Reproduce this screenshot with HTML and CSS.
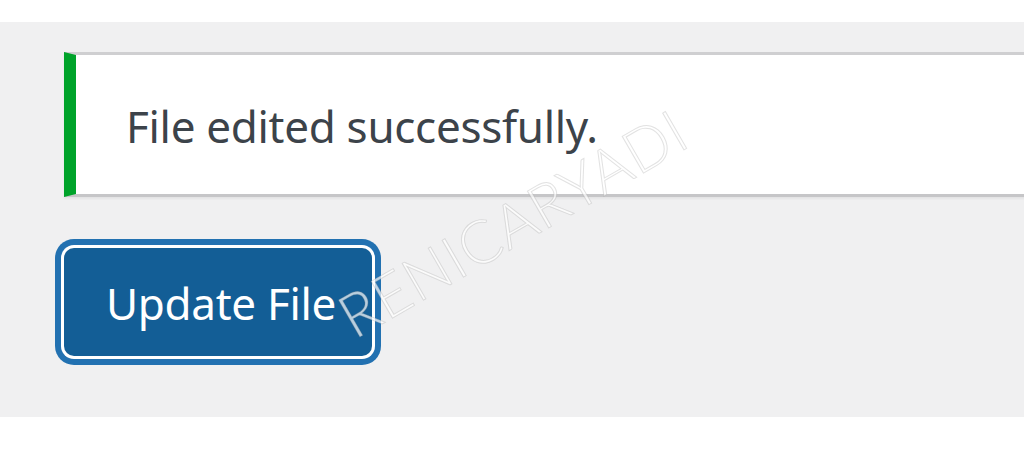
FILE: index.html
```html
<!DOCTYPE html>
<html lang="en">
<head>
<meta charset="utf-8">
<title>File edited</title>
<link rel="stylesheet" href="styles.css">
</head>
<body>
<div class="top-band"></div>
<main class="panel">
  <div class="notice notice-success">
    <p class="notice-text">File edited successfully.</p>
  </div>
  <div class="actions">
    <button class="button-primary" type="button">Update File</button>
  </div>
  <div class="watermark" aria-hidden="true">RENICARYADI</div>
</main>
<div class="bottom-band"></div>
</body>
</html>
```

FILE: styles.css
```css
html, body {
  margin: 0;
  padding: 0;
  background: #ffffff;
  overflow: hidden;
}

body {
  width: 1024px;
  height: 456px;
  font-family: "Noto Sans", "Open Sans", "Liberation Sans", sans-serif;
}

.top-band {
  height: 22px;
  background: #ffffff;
}

.panel {
  position: relative;
  height: 395px;
  background: #f0f0f1;
  padding-top: 30px;
  padding-left: 64px;
  box-sizing: border-box;
  overflow: hidden;
}

.notice {
  background: #ffffff;
  border-left: 12px solid #00a32a;
  border-top: 3px solid #cfcfd1;
  border-bottom: 3px solid #c6c6c8;
  box-shadow: 0 2px 2px rgba(0, 0, 0, 0.05);
  margin-right: -40px;
  display: flex;
  align-items: center;
  box-sizing: border-box;
  height: 145px;
}

.notice-text {
  margin: 0;
  padding-left: 50px;
  font-size: 44px;
  line-height: 1;
  color: #3c434a;
  letter-spacing: -0.3px;
  position: relative;
  top: 1px;
}

.actions {
  margin-top: 51px;
  display: flex;
}

.button-primary {
  width: 308px;
  height: 108px;
  background: #135e96;
  color: #ffffff;
  border: none;
  border-radius: 10px;
  box-shadow: 0 0 0 3px #ffffff, 0 0 0 9px #2271b1;
  font-family: "Noto Sans", "Open Sans", "Liberation Sans", sans-serif;
  font-size: 44px;
  letter-spacing: -0.3px;
  padding: 2px 0 0 6px;
  margin: 0;
  cursor: pointer;
}

.watermark {
  position: absolute;
  left: 358px;
  top: 264px;
  font-family: "Lato", "Noto Sans", sans-serif;
  font-weight: 300;
  font-size: 60px;
  line-height: 1;
  letter-spacing: 1px;
  color: rgba(255, 255, 255, 0.7);
  -webkit-text-stroke: 1px rgba(150, 150, 150, 0.28);
  transform: rotate(-30deg);
  transform-origin: left bottom;
  pointer-events: none;
  white-space: nowrap;
}

.bottom-band {
  height: 39px;
  background: #ffffff;
}
```
